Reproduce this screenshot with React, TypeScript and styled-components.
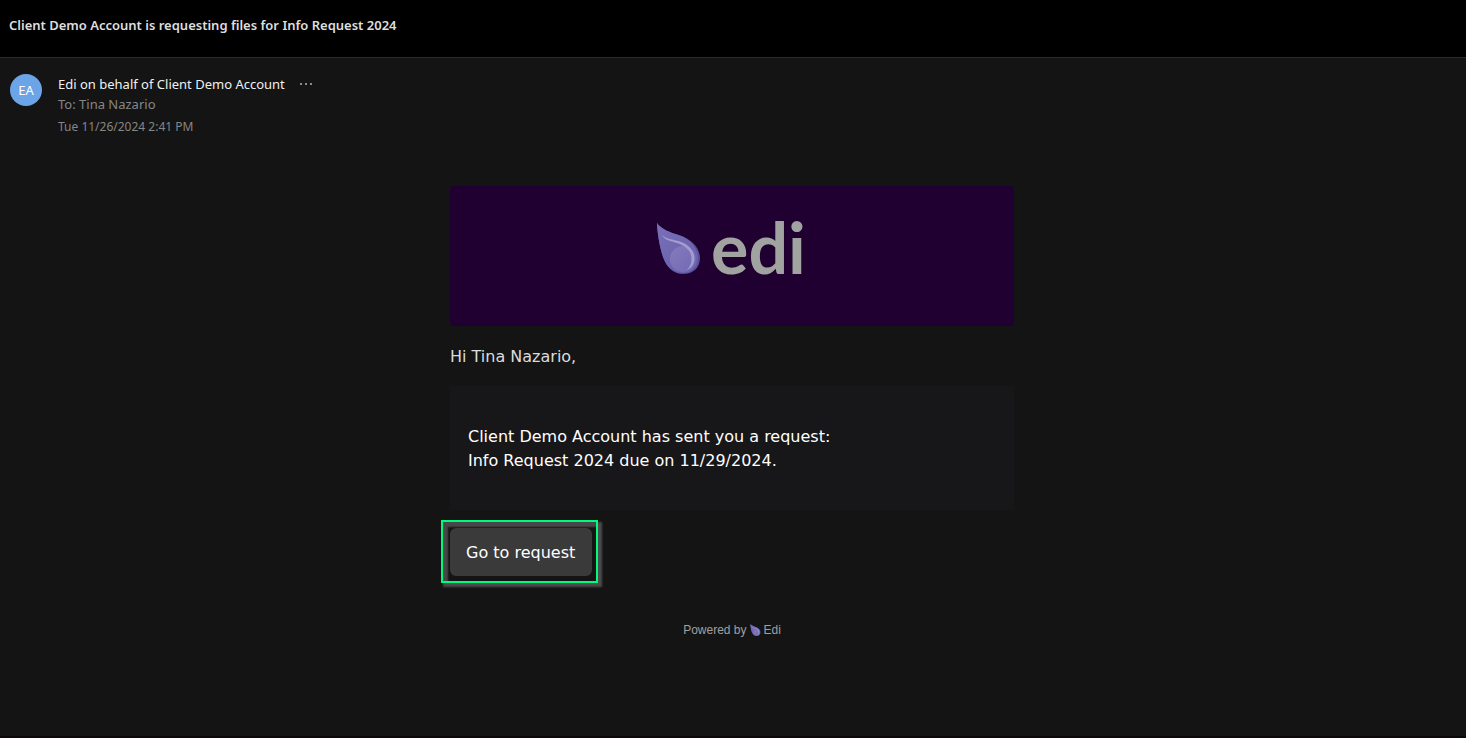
import React from "react";
import styled, { createGlobalStyle } from "styled-components";

const ui = `"Segoe UI", "Noto Sans", "Open Sans", sans-serif`;
const mail = `Verdana, "DejaVu Sans", sans-serif`;

const GlobalStyle = createGlobalStyle`
  *, *::before, *::after { box-sizing: border-box; }
  body { margin: 0; background: #141414; font-family: ${ui}; }
  h1, p { margin: 0; }
`;

const Page = styled.div`
  display: flex;
  flex-direction: column;
  min-height: 100vh;
  background: #141414;
  border-bottom: 2px solid #0d060d;
`;

const SubjectBar = styled.header`
  height: 58px;
  padding: 15px 9px;
  background: #000;
  border-bottom: 1px solid #2c2c2c;
`;

const Subject = styled.h1`
  font-size: 13px;
  line-height: 20px;
  font-weight: 600;
  color: #dedede;
`;

const MessageHeader = styled.section`
  display: flex;
  gap: 16px;
  padding: 16px 10px 0;
`;

const Avatar = styled.div`
  display: flex;
  align-items: center;
  justify-content: center;
  flex: none;
  width: 32px;
  height: 32px;
  border-radius: 50%;
  background: #6ba4e7;
  color: #fff;
  font-size: 13px;
`;

const Meta = styled.div`
  display: flex;
  flex-direction: column;
`;

const SenderRow = styled.div`
  display: flex;
  align-items: center;
  gap: 14px;
`;

const MetaLine = styled.p<{ $tone: string; $size?: number }>`
  font-size: ${({ $size }) => $size ?? 13}px;
  line-height: 20px;
  color: ${({ $tone }) => $tone};
`;

const SentAt = styled(MetaLine)`
  padding-top: 3px;
`;

const MoreButton = styled.button`
  display: flex;
  padding: 0;
  border: 0;
  background: none;
  color: #b4b4b4;
  cursor: pointer;
`;

const Message = styled.main`
  width: 100%;
  max-width: 566px;
  margin: 0 auto;
  padding: 49px 2px 24px 0;
  font-family: ${mail};
  font-size: 16px;
  line-height: 24px;
`;

const Banner = styled.div`
  display: flex;
  justify-content: center;
  align-items: flex-start;
  height: 140px;
  padding-top: 20px;
  border-radius: 3px;
  background: #1f0030;
`;

const Greeting = styled.p`
  padding: 19px 0 17px;
  color: #dcdcdc;
`;

const Panel = styled.div`
  padding: 39px 18px 37px;
  background: #17171a;
  color: #fff;
`;

const Action = styled.div`
  position: relative;
  width: fit-content;
  margin-top: 18px;
`;

const Highlight = styled.div`
  position: absolute;
  inset: -8px -6px -7px -9px;
  border: 2px solid #00fa7e;
  box-shadow: 3px 3px 2px 1px #4c4c4c, inset 4px 4px 2px 1px #484848;
  pointer-events: none;
`;

const RequestButton = styled.button`
  position: relative;
  display: block;
  height: 48px;
  padding: 2px 17px 0 16px;
  border: 0;
  border-radius: 6px;
  background: #3a3a3a;
  color: #fff;
  font: inherit;
  cursor: pointer;
`;

const Footer = styled.footer`
  display: flex;
  align-items: center;
  justify-content: center;
  gap: 3px;
  margin-top: 42px;
  font-family: Arial, "Liberation Sans", sans-serif;
  font-size: 12px;
  color: #a0a0a0;
`;

function DropShape({ id }: { id: string }) {
  return (
    <>
      <defs>
        <linearGradient id={`${id}-body`} x1="0" y1="0" x2="0.6" y2="1">
          <stop offset="0" stopColor="#7a70b8" />
          <stop offset="1" stopColor="#6961ae" />
        </linearGradient>
        <linearGradient id={`${id}-core`} x1="0" y1="0" x2="1" y2="1">
          <stop offset="0" stopColor="#867bbb" />
          <stop offset="1" stopColor="#6f68b5" />
        </linearGradient>
      </defs>
      <path
        d="M0 0C4 6 13 9.500 23 12.500C35 16.500 43 25 43 35C43 45 36 51 26 51C16 51 9.500 44 6 34C2.500 23 .3 10 0 0Z"
        fill="#584f98"
      />
      <path
        d="M0 0C4 6 13 9.500 23 12.500C33.500 16.500 41 25 41 35C41 44.500 34.500 50 26 50C16 50 9.500 44 6 34C2.500 23 .3 10 0 0Z"
        fill={`url(#${id}-body)`}
      />
      <circle cx="26" cy="36" r="13" fill={`url(#${id}-core)`} />
      <path
        d="M5 12C9 16 16 16.500 23 18.500C32 21.500 37.500 28 37.500 35C37.500 41.500 34 45.500 29.500 47C33 44 34.500 40.500 34.500 36C34.500 28 29 23.500 21.500 20.500C15 18 8 18 5 12Z"
        fill="#a49ccd"
      />
    </>
  );
}

function EdiLogo() {
  return (
    <svg width="152" height="90" viewBox="0 0 152 90" role="img" aria-label="edi">
      <g transform="translate(1 17)">
        <DropShape id="logo" />
      </g>
      <text
        x="55"
        y="68"
        fontFamily="Lato, sans-serif"
        fontWeight="700"
        fontSize="70"
        fill="#a0a3a0"
      >
        edi
      </text>
    </svg>
  );
}

export default function App() {
  return (
    <Page>
      <GlobalStyle />
      <SubjectBar>
        <Subject>Client Demo Account is requesting files for Info Request 2024</Subject>
      </SubjectBar>
      <MessageHeader>
        <Avatar>EA</Avatar>
        <Meta>
          <SenderRow>
            <MetaLine $tone="#f0f0f0">Edi on behalf of Client Demo Account</MetaLine>
            <MoreButton aria-label="More details">
              <svg width="14" height="4" viewBox="0 0 14 4" fill="currentColor">
                <circle cx="2" cy="2" r="1" />
                <circle cx="7" cy="2" r="1" />
                <circle cx="12" cy="2" r="1" />
              </svg>
            </MoreButton>
          </SenderRow>
          <MetaLine $tone="#868686">To: Tina Nazario</MetaLine>
          <SentAt $tone="#868686" $size={12}>Tue 11/26/2024 2:41 PM</SentAt>
        </Meta>
      </MessageHeader>
      <Message>
        <Banner>
          <EdiLogo />
        </Banner>
        <Greeting>Hi Tina Nazario,</Greeting>
        <Panel>
          <p>Client Demo Account has sent you a request:</p>
          <p>Info Request 2024 due on 11/29/2024.</p>
        </Panel>
        <Action>
          <Highlight />
          <RequestButton>Go to request</RequestButton>
        </Action>
        <Footer>
          <span>Powered by</span>
          <svg width="11" height="12" viewBox="0 0 43 51" aria-hidden="true">
            <DropShape id="mark" />
          </svg>
          <span>Edi</span>
        </Footer>
      </Message>
    </Page>
  );
}
